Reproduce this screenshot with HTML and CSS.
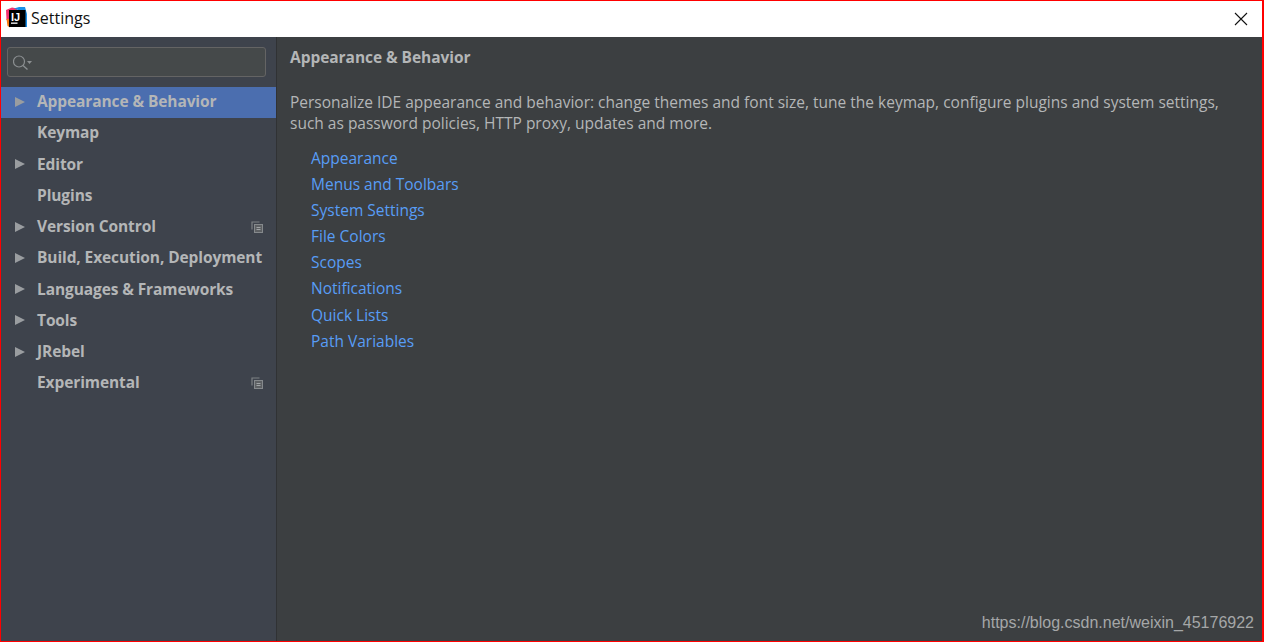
FILE: index.html
```html
<!DOCTYPE html>
<html lang="en">
<head>
    <meta charset="UTF-8">
    <meta name="viewport" content="width=device-width, initial-scale=1.0">
    <title>Settings</title>
    <link rel="stylesheet" href="styles.css">
</head>
<body>
    <div class="window">
        <div class="titlebar">
            <svg class="app-icon" width="21" height="21" viewBox="0 0 21 21">
                <path d="M0 3 L6 0.5 L11 1.5 L11 6 L3 14 L0.5 13 Z" fill="#f5326e"/>
                <path d="M8 1.5 L13 0 L19 0 L21 7 L21 20 L12 20 L12 3 Z" fill="#1a8fe8"/>
                <path d="M0.5 12 L4 12 L4 20.5 L1.5 19 Z" fill="#f97a12"/>
                <rect x="3" y="3" width="16.5" height="17" fill="#000"/>
                <text x="5" y="13.5" class="app-icon-text">IJ</text>
                <rect x="5" y="15.5" width="6.5" height="1.3" fill="#fff"/>
            </svg>
            <span class="title">Settings</span>
            <svg class="close" width="14" height="14" viewBox="0 0 14 14">
                <path d="M1 1 L13 13 M13 1 L1 13" stroke="#111" stroke-width="1.1" fill="none"/>
            </svg>
        </div>
        <div class="content">
            <div class="sidebar">
                <div class="search">
                    <svg width="24" height="18" viewBox="0 0 24 18">
                        <circle cx="6" cy="8.5" r="5.5" stroke="#8b8f91" stroke-width="1.2" fill="none"/>
                        <path d="M10 12.5 L14.5 16.5" stroke="#8b8f91" stroke-width="1.4"/>
                        <path d="M14 8 L19 8 L16.5 11 Z" fill="#8b8f91"/>
                    </svg>
                </div>
                <ul class="tree">
                    <li class="row selected"><span class="arrow"></span><span class="label">Appearance &amp; Behavior</span></li>
                    <li class="row"><span class="no-arrow"></span><span class="label">Keymap</span></li>
                    <li class="row"><span class="arrow"></span><span class="label">Editor</span></li>
                    <li class="row"><span class="no-arrow"></span><span class="label">Plugins</span></li>
                    <li class="row"><span class="arrow"></span><span class="label">Version Control</span>
                        <svg class="copy" width="12" height="12" viewBox="0 0 12 12">
                            <path d="M8.5 1 H1 V8.5" fill="none" stroke="#7d8184" stroke-width="1.2"/>
                            <rect x="3.5" y="3.5" width="8" height="8" fill="#5d6063" stroke="#85898c"/>
                            <path d="M5.5 6.5 H9.5 M5.5 8.5 H9.5" stroke="#a0a4a6"/>
                        </svg>
                    </li>
                    <li class="row"><span class="arrow"></span><span class="label">Build, Execution, Deployment</span></li>
                    <li class="row"><span class="arrow"></span><span class="label">Languages &amp; Frameworks</span></li>
                    <li class="row"><span class="arrow"></span><span class="label">Tools</span></li>
                    <li class="row"><span class="arrow"></span><span class="label">JRebel</span></li>
                    <li class="row"><span class="no-arrow"></span><span class="label">Experimental</span>
                        <svg class="copy" width="12" height="12" viewBox="0 0 12 12">
                            <path d="M8.5 1 H1 V8.5" fill="none" stroke="#7d8184" stroke-width="1.2"/>
                            <rect x="3.5" y="3.5" width="8" height="8" fill="#5d6063" stroke="#85898c"/>
                            <path d="M5.5 6.5 H9.5 M5.5 8.5 H9.5" stroke="#a0a4a6"/>
                        </svg>
                    </li>
                </ul>
            </div>
            <div class="main">
                <h1>Appearance &amp; Behavior</h1>
                <p>Personalize IDE appearance and behavior: change themes and font size, tune the keymap, configure plugins and system settings, such as password policies, HTTP proxy, updates and more.</p>
                <div class="links">
                    <a href="#">Appearance</a>
                    <a href="#">Menus and Toolbars</a>
                    <a href="#">System Settings</a>
                    <a href="#">File Colors</a>
                    <a href="#">Scopes</a>
                    <a href="#">Notifications</a>
                    <a href="#">Quick Lists</a>
                    <a href="#">Path Variables</a>
                </div>
                <div class="watermark">https://blog.csdn.net/weixin_45176922</div>
            </div>
        </div>
    </div>
</body>
</html>
```

FILE: styles.css
```css
html, body {
    margin: 0;
    height: 100%;
    overflow: hidden;
}
.window {
    box-sizing: border-box;
    height: 642px;
    display: flex;
    flex-direction: column;
    border: 1px solid #f00;
    border-right-width: 2px;
    font-family: "Open Sans", "Noto Sans", sans-serif;
}
.titlebar {
    height: 36px;
    flex-shrink: 0;
    display: flex;
    align-items: center;
    background-color: white;
    padding-left: 5px;
}
.app-icon {
    margin-right: 4px;
    margin-bottom: 3px;
}
.app-icon-text {
    font-family: "Liberation Sans", sans-serif;
    font-size: 11px;
    font-weight: bold;
    fill: white;
}
.title {
    font-size: 16px;
    line-height: 20px;
    margin-bottom: 2px;
    color: #111;
}
.close {
    margin-left: auto;
    margin-right: 14px;
}
.content {
    flex: 1;
    display: flex;
    min-height: 0;
}
.sidebar {
    width: 275px;
    flex-shrink: 0;
    background-color: #3e434c;
    border-right: 1px solid #303234;
}
.search {
    box-sizing: border-box;
    height: 30px;
    margin: 10px 10px 10px 6px;
    display: flex;
    align-items: center;
    padding-left: 5px;
    background-color: #45494a;
    border: 1px solid #646464;
    border-radius: 3px;
}
.tree {
    list-style: none;
    margin: 0;
    padding: 0;
}
.row {
    height: 31.25px;
    display: flex;
    align-items: center;
    font-size: 15.5px;
    font-weight: 700;
    letter-spacing: -0.1px;
    color: #b4b6b7;
    white-space: nowrap;
}
.label {
    line-height: 20px;
    margin-bottom: 3px;
}
.row.selected {
    background-color: #4b6eaf;
}
.arrow {
    width: 0;
    height: 0;
    margin-left: 14px;
    margin-right: 12px;
    margin-bottom: 2px;
    border-left: 10px solid #9a9da0;
    border-top: 5.5px solid transparent;
    border-bottom: 5.5px solid transparent;
}
.no-arrow {
    width: 36px;
}
.copy {
    margin-left: auto;
    margin-right: 13px;
    margin-bottom: 2px;
}
.main {
    flex: 1;
    position: relative;
    background-color: #3c3f41;
    padding: 0 13px;
    color: #b4b6b7;
    font-size: 15.5px;
}
h1 {
    margin: 10px 0 0;
    font-size: 15.5px;
    font-weight: 700;
    letter-spacing: -0.05px;
    line-height: 21px;
}
p {
    margin: 24px 0 0;
    line-height: 21px;
}
.links {
    display: flex;
    flex-direction: column;
    align-items: flex-start;
    margin-top: 10.5px;
    padding-left: 21px;
}
.links a {
    height: 26.2px;
    line-height: 26px;
    font-size: 15.5px;
    color: #589df6;
    text-decoration: none;
}
.watermark {
    position: absolute;
    right: 8px;
    bottom: 9px;
    font-family: "Liberation Sans", sans-serif;
    font-size: 16px;
    color: #a5a7a8;
}
```
